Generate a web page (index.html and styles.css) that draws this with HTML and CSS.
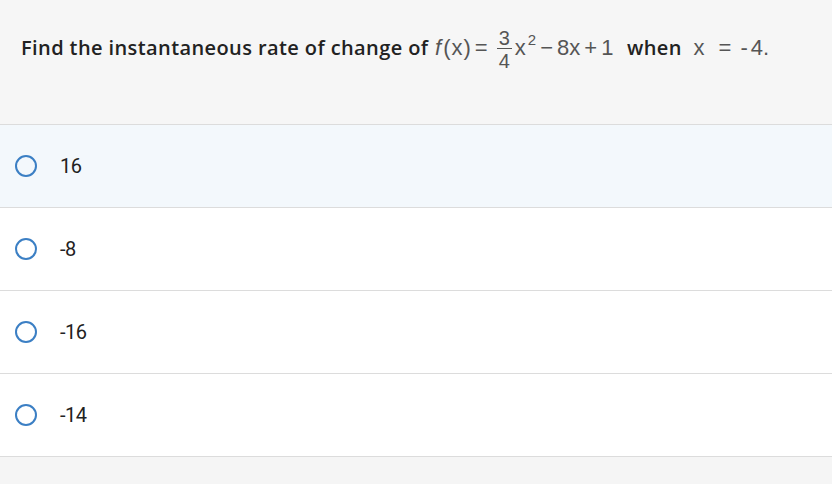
FILE: index.html
```html
<!DOCTYPE html>
<html>
<head>
<meta charset="utf-8">
<link rel="stylesheet" href="styles.css">
</head>
<body>
<div class="page">
  <div class="question">
    <p class="prompt"><span class="lead">Find the instantaneous rate of change of</span> <span class="math"><i class="fn">f</i>(<span class="var">x</span>)<span class="op eqop">=</span><span class="frac"><span class="num">3</span><span class="den">4</span></span>x<sup class="sup">2</sup><span class="op">−</span>8x<span class="op">+</span>1</span> when <span class="math mx">x <span class="eq">=</span> -<span class="four">4</span>.</span></p>
  </div>
  <ul class="options">
    <li class="option active"><span class="radio"></span><span class="label">16</span></li>
    <li class="option"><span class="radio"></span><span class="label">-8</span></li>
    <li class="option"><span class="radio"></span><span class="label">-16</span></li>
    <li class="option"><span class="radio"></span><span class="label">-14</span></li>
  </ul>
</div>
</body>
</html>
```
FILE: styles.css
```css
html, body {
  margin: 0;
  padding: 0;
  background: #f5f5f5;
}
.page {
  width: 832px;
  height: 484px;
  background: #f5f5f5;
  font-family: "Open Sans", sans-serif;
  color: #222;
}
.question {
  height: 125px;
  box-sizing: border-box;
  padding: 24px 21px 0;
  background: #f6f6f6;
  border-bottom: 1px solid #dcdcdc;
}
.prompt {
  margin: 0;
  font-size: 20px;
  font-weight: 600;
  letter-spacing: 0.4px;
  line-height: 48px;
  white-space: nowrap;
}
.math {
  font-family: "Liberation Sans", sans-serif;
  font-weight: 400;
  letter-spacing: 0;
  color: #555;
  font-size: 22px;
  margin: 0 8px 0 1px;
}
.fn {
  font-style: italic;
  margin-right: 2px;
}
.var {
  margin: 0 1px;
}
.op {
  margin: 0 4px;
}
.op.eqop {
  margin: 0 4px;
}
.frac {
  display: inline-flex;
  flex-direction: column;
  align-items: center;
  vertical-align: 10px;
  font-size: 20px;
  line-height: 20px;
  margin: 0 3px 0 5px;
}
.num {
  border-bottom: 1.5px solid #555;
  padding: 0 2px;
}
.den {
  padding-top: 1.5px;
}
.sup {
  font-size: 15px;
  vertical-align: 10px;
  line-height: 0;
  margin-left: 2px;
}
.mx {
  margin-left: 6px;
}
.eq {
  margin: 0 3px 0 8px;
}
.four {
  margin-left: 3px;
}
.options {
  list-style: none;
  margin: 0;
  padding: 0;
}
.option {
  height: 82px;
  border-bottom: 1px solid #dcdcdc;
  background: #fff;
  display: flex;
  align-items: center;
  padding-left: 15px;
}
.option.active {
  background: #f3f8fc;
}
.radio {
  width: 18px;
  height: 18px;
  border: 2px solid #3b7fc4;
  border-radius: 50%;
  flex: none;
}
.label {
  margin-left: 23px;
  font-family: "Roboto", sans-serif;
  font-size: 20px;
  letter-spacing: -0.5px;
  color: #222;
}
```
